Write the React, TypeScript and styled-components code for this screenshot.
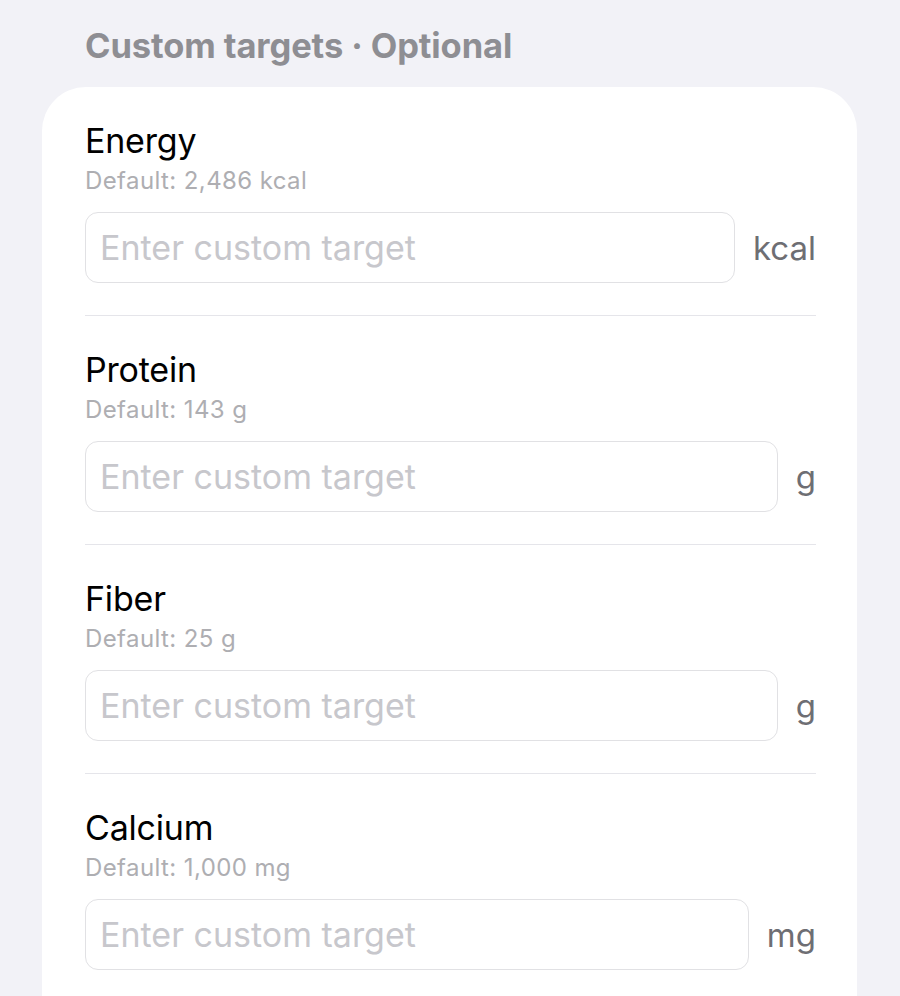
import styled, { createGlobalStyle } from "styled-components";

const GlobalStyle = createGlobalStyle`
  html, body {
    margin: 0;
    padding: 0;
    background: #f2f2f7;
    font-family: Inter, "Noto Sans", "Liberation Sans", sans-serif;
    -webkit-font-smoothing: antialiased;
  }
`;

type Target = {
  name: string;
  defaultValue: string;
  unit: string;
};

const targets: Target[] = [
  { name: "Energy", defaultValue: "2,486 kcal", unit: "kcal" },
  { name: "Protein", defaultValue: "143 g", unit: "g" },
  { name: "Fiber", defaultValue: "25 g", unit: "g" },
  { name: "Calcium", defaultValue: "1,000 mg", unit: "mg" },
];

const App = () => {
  return (
    <>
      <GlobalStyle />
      <Page>
        <Heading>Custom targets · Optional</Heading>
        <Card>
          {targets.map((t) => (
            <Row key={t.name}>
              <Name>{t.name}</Name>
              <Hint>Default: {t.defaultValue}</Hint>
              <Field>
                <Input placeholder="Enter custom target" inputMode="decimal" />
                <Unit>{t.unit}</Unit>
              </Field>
            </Row>
          ))}
        </Card>
      </Page>
    </>
  );
};

export default App;

const Page = styled.div`
  height: 996px;
  overflow: hidden;
  padding: 0 43px 0 42px;
  box-sizing: border-box;
`;

const Heading = styled.h2`
  margin: 0;
  padding: 24px 0 0 43px;
  height: 87px;
  box-sizing: border-box;
  font-size: 34.5px;
  line-height: 44px;
  font-weight: 700;
  color: #8e8e93;
  letter-spacing: -0.1px;
`;

const Card = styled.div`
  background: #ffffff;
  border-radius: 44px 44px 0 0;
  padding: 0 41px 0 43px;
  min-height: 960px;
`;

const Row = styled.div`
  display: flex;
  flex-direction: column;
  padding: 34px 0 32px;
  border-bottom: 1.5px solid #e5e5ea;
  &:last-child {
    border-bottom: none;
  }
`;

const Name = styled.div`
  font-size: 34px;
  line-height: 40px;
  color: #000000;
  letter-spacing: -0.2px;
`;

const Hint = styled.div`
  font-size: 24px;
  line-height: 30px;
  color: #aeaeb2;
  margin-top: 5px;
  letter-spacing: 0.4px;
`;

const Field = styled.div`
  display: flex;
  align-items: center;
  gap: 18px;
  margin-top: 16px;
`;

const Input = styled.input`
  flex: 1;
  min-width: 0;
  height: 71px;
  box-sizing: border-box;
  border: 1.5px solid #e1e1e4;
  border-radius: 13px;
  padding: 0 14px;
  font-family: inherit;
  font-size: 34px;
  color: #000;
  background: #fff;
  outline: none;
  &::placeholder {
    color: #c7c7cc;
  }
`;

const Unit = styled.span`
  font-size: 33px;
  color: #6e6e73;
`;
